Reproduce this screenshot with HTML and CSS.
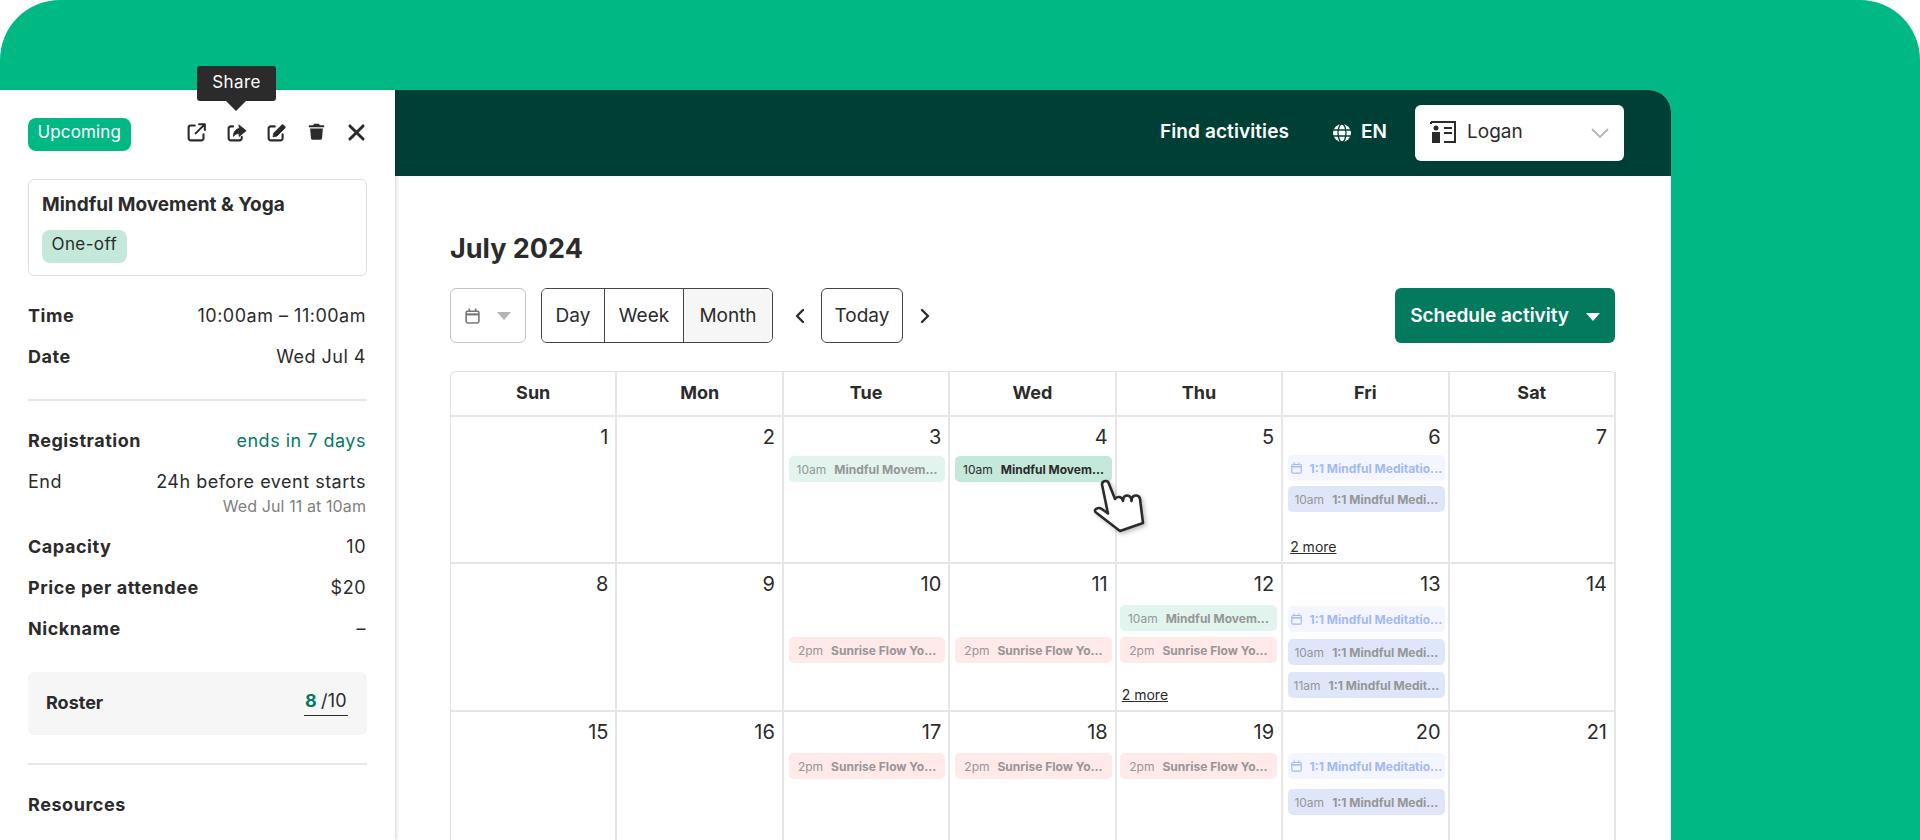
FILE: index.html

```html
<!DOCTYPE html>
<html lang="en">
<head>
  <meta charset="UTF-8">
  <meta name="viewport" content="width=device-width, initial-scale=1.0">
  <title>Activity calendar</title>
  <link rel="stylesheet" href="styles.css">
</head>

<body>
  <div class="backdrop">
    <div class="app">

      <aside class="sidebar">
        <div class="sidebar-top">
          <span class="badge">Upcoming</span>
          <div class="actions">
            <svg class="icon" viewBox="0 0 24 24" fill="none" stroke="#2b2b2b" stroke-width="2.4" stroke-linecap="round" stroke-linejoin="round"><path d="M10 4H5.5A2.5 2.5 0 0 0 3 6.5v12A2.5 2.5 0 0 0 5.5 21h12a2.5 2.5 0 0 0 2.5-2.5V14"/><path d="M15 2.5h6.500V9M21 3 11 13"/></svg>
            <svg class="icon" viewBox="0 0 24 24" fill="none" stroke="#2b2b2b" stroke-width="2.4" stroke-linecap="round" stroke-linejoin="round"><path d="M8 5H5.5A2.5 2.5 0 0 0 3 7.5v11A2.5 2.5 0 0 0 5.5 21h10a2.5 2.5 0 0 0 2.5-2.5V17"/><path fill="#2b2b2b" stroke-width="1" d="M15 3.5 23 10l-8 6.5v-3.3c-3 0-5 .8-6.5 3.300 0-5 2.500-8.500 6.500-9z"/></svg>
            <svg class="icon" viewBox="0 0 24 24" fill="none" stroke="#2b2b2b" stroke-width="2.4" stroke-linecap="round" stroke-linejoin="round"><path d="M10 5H5.5A2.5 2.5 0 0 0 3 7.5v11A2.5 2.5 0 0 0 5.5 21h11a2.5 2.5 0 0 0 2.5-2.5V14"/><path fill="#2b2b2b" stroke-width="1" d="M9 12.5 18 3.5a1.5 1.5 0 0 1 2 0l1.500 1.500a1.500 1.500 0 0 1 0 2l-9 9-4 1z"/></svg>
            <svg class="icon icon-small" viewBox="0 0 20 20" fill="#2b2b2b"><path d="M7 1h6l.8 1.5H19V5H1V2.500h5.200zM2.500 6.500h15L16.500 18a2 2 0 0 1-2 1.800h-9a2 2 0 0 1-2-1.800z"/></svg>
            <svg class="icon" viewBox="0 0 24 24" fill="none" stroke="#2b2b2b" stroke-width="3.4" stroke-linecap="round"><path d="M4.500 4.500 19.500 19.500M19.500 4.500 4.500 19.500"/></svg>
          </div>
          <div class="tooltip">Share</div>
        </div>

        <div class="activity-card">
          <div class="activity-name">Mindful Movement &amp; Yoga</div>
          <span class="tag">One-off</span>
        </div>

        <div class="row first-row"><b>Time</b><span>10:00am – 11:00am</span></div>
        <div class="row"><b>Date</b><span>Wed Jul 4</span></div>

        <hr class="divider">

        <div class="row"><b>Registration</b><span class="text-green">ends in 7 days</span></div>
        <div class="row"><span>End</span><span>24h before event starts</span></div>
        <div class="row-sub">Wed Jul 11 at 10am</div>
        <div class="row capacity"><b>Capacity</b><span>10</span></div>
        <div class="row"><b>Price per attendee</b><span>$20</span></div>
        <div class="row"><b>Nickname</b><span>–</span></div>

        <div class="roster">
          <b>Roster</b>
          <span class="roster-count"><b class="text-green">8</b>/10</span>
        </div>

        <hr class="divider divider-roster">

        <div class="row resources"><b>Resources</b></div>
      </aside>

      <main class="main">
        <header class="topbar">
          <a class="topbar-link">Find activities</a>
          <div class="lang">
            <svg width="18" height="18" viewBox="0 0 18 18" fill="#fff" stroke="#003f35" stroke-width="1.3"><circle cx="9" cy="9" r="9" stroke="none"/><ellipse cx="9" cy="9" rx="4" ry="9" fill="none"/><path d="M0 6h18M0 12h18" fill="none"/></svg>
            <span>EN</span>
          </div>
          <div class="user-select">
            <svg width="26" height="24" viewBox="0 0 26 24" fill="none" stroke="#2b2b2b" stroke-width="2"><path d="M1 2h24v20H14"/><path d="M1 2v2"/><path d="M14 8h8M14 13h8"/><circle cx="6" cy="8" r="2.5" fill="#2b2b2b" stroke="none"/><path d="M2 12h8v11H2z" fill="#2b2b2b" stroke="none"/></svg>
            <span class="user-name">Logan</span>
            <svg class="chevron-down" width="18" height="10" viewBox="0 0 18 10" fill="none" stroke="#b5b5b5" stroke-width="1.8"><path d="M1 1l8 8 8-8"/></svg>
          </div>
        </header>

        <section class="content">
          <h1 class="month-title">July 2024</h1>

          <div class="toolbar">
            <div class="picker">
              <svg width="15" height="16" viewBox="0 0 14 15" fill="none" stroke="#777" stroke-width="1.5"><rect x="1" y="3" width="12" height="11" rx="1.5"/><path d="M1 6h12" stroke-width="2"/><path d="M4 .5v3M10 .5v3"/></svg>
              <span class="caret caret-grey"></span>
            </div>
            <div class="segmented">
              <button type="button" class="seg seg-day">Day</button>
              <button type="button" class="seg seg-week">Week</button>
              <button type="button" class="seg seg-month">Month</button>
            </div>
            <svg class="nav-prev" width="10" height="16" viewBox="0 0 10 16" fill="none" stroke="#2b2b2b" stroke-width="2.4" stroke-linecap="round" stroke-linejoin="round"><path d="M8 2 2 8l6 6"/></svg>
            <button type="button" class="today">Today</button>
            <svg class="nav-next" width="10" height="16" viewBox="0 0 10 16" fill="none" stroke="#2b2b2b" stroke-width="2.4" stroke-linecap="round" stroke-linejoin="round"><path d="M2 2l6 6-6 6"/></svg>
            <button type="button" class="schedule">Schedule activity <span class="caret"></span></button>
          </div>

          <div class="calendar">
            <div class="head">Sun</div>
            <div class="head">Mon</div>
            <div class="head">Tue</div>
            <div class="head">Wed</div>
            <div class="head">Thu</div>
            <div class="head">Fri</div>
            <div class="head">Sat</div>

            <div class="day"><div class="num">1</div></div>
            <div class="day"><div class="num">2</div></div>
            <div class="day">
              <div class="num">3</div>
              <div class="event green faded"><span class="time">10am</span><b>Mindful Movem...</b></div>
            </div>
            <div class="day">
              <div class="num">4</div>
              <div class="event green"><span class="time">10am</span><b>Mindful Movem...</b></div>
            </div>
            <div class="day"><div class="num">5</div></div>
            <div class="day gap-5">
              <div class="num">6</div>
              <div class="event sky"><svg class="event-icon" viewBox="0 0 14 15" fill="none" stroke="#a3b9f7" stroke-width="1.5"><rect x="1" y="3" width="12" height="11" rx="1.5"/><path d="M1 6h12" stroke-width="2"/><path d="M4 .5v3M10 .5v3"/></svg><b>1:1 Mindful Meditatio...</b></div>
              <div class="event blue"><span class="time">10am</span><b>1:1 Mindful Medi...</b></div>
              <a class="more">2 more</a>
            </div>
            <div class="day"><div class="num">7</div></div>

            <div class="day"><div class="num">8</div></div>
            <div class="day"><div class="num">9</div></div>
            <div class="day">
              <div class="num">10</div>
              <div class="slot"></div>
              <div class="event pink"><span class="time">2pm</span><b>Sunrise Flow Yo...</b></div>
            </div>
            <div class="day">
              <div class="num">11</div>
              <div class="slot"></div>
              <div class="event pink"><span class="time">2pm</span><b>Sunrise Flow Yo...</b></div>
            </div>
            <div class="day thu">
              <div class="num">12</div>
              <div class="event green faded"><span class="time">10am</span><b>Mindful Movem...</b></div>
              <div class="event pink"><span class="time">2pm</span><b>Sunrise Flow Yo...</b></div>
              <a class="more">2 more</a>
            </div>
            <div class="day gap-7">
              <div class="num">13</div>
              <div class="event sky"><svg class="event-icon" viewBox="0 0 14 15" fill="none" stroke="#a3b9f7" stroke-width="1.5"><rect x="1" y="3" width="12" height="11" rx="1.5"/><path d="M1 6h12" stroke-width="2"/><path d="M4 .5v3M10 .5v3"/></svg><b>1:1 Mindful Meditatio...</b></div>
              <div class="event blue"><span class="time">10am</span><b>1:1 Mindful Medi...</b></div>
              <div class="event blue"><span class="time">11am</span><b>1:1 Mindful Medit...</b></div>
            </div>
            <div class="day"><div class="num">14</div></div>

            <div class="day"><div class="num">15</div></div>
            <div class="day"><div class="num">16</div></div>
            <div class="day">
              <div class="num">17</div>
              <div class="event pink"><span class="time">2pm</span><b>Sunrise Flow Yo...</b></div>
            </div>
            <div class="day">
              <div class="num">18</div>
              <div class="event pink"><span class="time">2pm</span><b>Sunrise Flow Yo...</b></div>
            </div>
            <div class="day thu">
              <div class="num">19</div>
              <div class="event pink"><span class="time">2pm</span><b>Sunrise Flow Yo...</b></div>
            </div>
            <div class="day gap-10">
              <div class="num">20</div>
              <div class="event sky"><svg class="event-icon" viewBox="0 0 14 15" fill="none" stroke="#a3b9f7" stroke-width="1.5"><rect x="1" y="3" width="12" height="11" rx="1.5"/><path d="M1 6h12" stroke-width="2"/><path d="M4 .5v3M10 .5v3"/></svg><b>1:1 Mindful Meditatio...</b></div>
              <div class="event blue"><span class="time">10am</span><b>1:1 Mindful Medi...</b></div>
            </div>
            <div class="day"><div class="num">21</div></div>
          </div>

          <svg class="hand" width="60" height="62" viewBox="0 0 60 62" fill="#fff" stroke="#2b2b2b" stroke-width="2.6" stroke-linejoin="round" stroke-linecap="round">
            <path d="M5 32c-1.5 1-1.5 2.5 0 3.5L29 54l23-8-3-24c-.5-4-6-5-8-1l-.5 3c0-6-6-7-8-3l-.5 3c-1-5-6-5-8-2L18 7c-1-4.500-7-3.500-7 .5l6 29-7-5c-2-1-3.500-.5-5 .5z"/>
          </svg>
        </section>
      </main>

    </div>
  </div>
</body>
</html>
```

FILE: styles.css

```css
* {
  box-sizing: border-box;
}

body {
  margin: 0;
  background-color: #fff;
  font-family: 'Inter', 'Liberation Sans', sans-serif;
  color: #2b2b2b;
}

.backdrop {
  height: 840px;
  overflow: hidden;
  padding: 90px 249px 0 0;
  background-color: #00b884;
  border-radius: 60px 60px 0 0;
}

.app {
  display: flex;
  height: 750px;
}

/* left panel */
.sidebar {
  position: relative;
  z-index: 2;
  width: 395px;
  flex-shrink: 0;
  padding: 28px 28px 0;
  background-color: #fff;
  box-shadow: 2px 0 3px rgba(0, 0, 0, 0.12);
}

.sidebar-top {
  position: relative;
  display: flex;
  align-items: center;
  justify-content: space-between;
  height: 33px;
}

.badge {
  padding: 0 9.5px 4px;
  line-height: 29px;
  border-radius: 8px;
  background-color: #00b884;
  color: #fff;
  font-size: 17px;
  letter-spacing: 0.15px;
}

.actions {
  display: flex;
  align-items: center;
  gap: 19px;
  margin-bottom: 4px;
}

.icon {
  width: 21px;
  height: 21px;
}

.icon-small {
  width: 17px;
  height: 19px;
  margin: 0 2px 3px;
}

.tooltip {
  position: absolute;
  left: 169px;
  top: -52px;
  width: 79px;
  height: 35px;
  border-radius: 3px;
  background-color: #2b2b2b;
  color: #fff;
  font-size: 17px;
  letter-spacing: 0.4px;
  line-height: 32px;
  text-align: center;
}

.tooltip::after {
  content: "";
  position: absolute;
  left: 29px;
  top: 35px;
  border: 10px solid transparent;
  border-bottom: 0;
  border-top-color: #2b2b2b;
}

.activity-card {
  height: 97px;
  margin-top: 28px;
  padding: 13px 13px 0;
  border: 1px solid #dedede;
  border-radius: 6px;
}

.activity-name {
  font-size: 19px;
  font-weight: 700;
  line-height: 24px;
}

.tag {
  display: inline-block;
  margin-top: 13px;
  padding: 0 9.5px 4px;
  line-height: 29px;
  border-radius: 8px;
  background-color: #c4e8da;
  font-size: 17px;
  letter-spacing: 0.4px;
}

.row {
  display: flex;
  justify-content: space-between;
  height: 24px;
  margin-top: 17px;
  padding-right: 1px;
  font-size: 18px;
  letter-spacing: 0.5px;
  line-height: 24px;
}

.first-row {
  margin-top: 28px;
}

.row b {
  font-weight: 700;
  letter-spacing: 0.55px;
}

.text-green {
  color: #037a5e;
}

.row-sub {
  margin-top: 2px;
  padding-right: 1px;
  color: #808080;
  font-size: 16px;
  letter-spacing: 0.1px;
  line-height: 20px;
  text-align: right;
}

.capacity {
  margin-top: 19px;
}

.divider {
  height: 2px;
  margin: 30px 0 28px;
  border: 0;
  background-color: #e6e6e6;
}

.roster {
  display: flex;
  align-items: center;
  justify-content: space-between;
  height: 63px;
  margin-top: 31px;
  padding: 0 19px 2px 18px;
  border-radius: 6px;
  background-color: #f6f6f6;
  font-size: 18px;
}

.roster b {
  font-weight: 700;
}

.roster-count {
  padding: 0 1px 4px;
  border-bottom: 1px solid #2b2b2b;
  letter-spacing: 0.3px;
}

.roster-count b {
  margin-right: 4px;
}

.divider-roster {
  margin: 28px 0 0;
}

.resources {
  margin-top: 28px;
}

/* main panel */
.main {
  flex: 1;
  min-width: 0;
  display: flex;
  flex-direction: column;
  overflow: hidden;
  border-top-right-radius: 22px;
  background-color: #fff;
}

.topbar {
  display: flex;
  align-items: center;
  justify-content: flex-end;
  flex-shrink: 0;
  height: 86px;
  padding: 0 47px 0 0;
  background-color: #003f35;
  color: #fff;
  font-size: 19px;
  font-weight: 600;
}

.topbar-link,
.lang span {
  margin-bottom: 3px;
}

.topbar-link {
  letter-spacing: 0.1px;
}

.lang {
  display: flex;
  align-items: center;
  gap: 10px;
  margin-left: 44px;
}

.user-select {
  display: flex;
  align-items: center;
  width: 209px;
  height: 56px;
  margin-left: 28px;
  padding: 0 15px 3px;
  border-radius: 6px;
  background-color: #fff;
  color: #2b2b2b;
  font-weight: 400;
}

.user-name {
  margin-left: 11px;
}

.chevron-down {
  margin-left: auto;
  margin-top: 3px;
}

.content {
  position: relative;
  padding: 56px 56px 0 55px;
}

.month-title {
  margin: 0;
  font-size: 27px;
  font-weight: 700;
  line-height: 34px;
}

.toolbar {
  display: flex;
  align-items: center;
  height: 55px;
  margin-top: 22px;
}

.picker {
  display: flex;
  align-items: center;
  justify-content: center;
  gap: 17px;
  width: 76px;
  height: 55px;
  border: 1px solid #c4c4c4;
  border-radius: 6px;
}

.caret {
  display: inline-block;
  border: 7px solid transparent;
  border-bottom: 0;
  border-top: 8px solid #fff;
  vertical-align: 1px;
  margin-left: 12px;
}

.caret-grey {
  margin: 0;
  border-top-color: #b5b5b5;
}

.segmented {
  display: flex;
  height: 55px;
  margin-left: 15px;
  border: 1px solid #444;
  border-radius: 6px;
  overflow: hidden;
}

.seg,
.today {
  padding: 0;
  background-color: #fff;
  border: 0;
  color: #2b2b2b;
  font-family: inherit;
  font-size: 19px;
}

.seg-day {
  width: 62px;
}

.seg-week {
  width: 80px;
  border-left: 1px solid #444;
  border-right: 1px solid #444;
}

.seg-month {
  width: 88px;
  background-color: #f6f6f6;
}

.nav-prev {
  margin-left: 22px;
}

.today {
  width: 82px;
  height: 55px;
  margin-left: 16px;
  border: 1px solid #444;
  border-radius: 6px;
}

.nav-next {
  margin-left: 17px;
}

.schedule {
  width: 220px;
  height: 55px;
  margin-left: auto;
  border: 0;
  border-radius: 6px;
  background-color: #037a5e;
  color: #fff;
  font-family: inherit;
  font-size: 19px;
  font-weight: 600;
}

.calendar {
  display: grid;
  grid-template-columns: repeat(7, 1fr);
  grid-template-rows: 45px 147px 148px 148px;
  width: 1166px;
  margin-top: 28px;
  border-top: 1px solid #e0e0e0;
  border-left: 1px solid #e0e0e0;
  border-radius: 6px 6px 0 0;
}

.head {
  display: flex;
  align-items: center;
  justify-content: center;
  padding-bottom: 2px;
  border-right: 2px solid #e6e6e6;
  border-bottom: 2px solid #e6e6e6;
  font-size: 18px;
  font-weight: 700;
}

.day {
  display: flex;
  flex-direction: column;
  gap: 6px;
  min-width: 0;
  padding: 7px 3px 6px 5px;
  border-right: 2px solid #e6e6e6;
  border-bottom: 2px solid #e6e6e6;
}

.thu {
  padding-left: 3px;
  padding-right: 4px;
}

.gap-5 {
  gap: 5px;
}

.gap-7 {
  gap: 7px;
}

.gap-10 {
  gap: 10px;
}

.num {
  height: 26px;
  padding-right: 4px;
  font-size: 20px;
  line-height: 26px;
  text-align: right;
}

/* events sit 2px lower from the second week on */
.day:nth-child(n+15) .num {
  margin-bottom: 2px;
}

.day.gap-10 .num {
  margin-bottom: -2px;
}

.thu .num {
  padding-right: 3px;
}

.slot {
  height: 26px;
}

.event {
  display: flex;
  align-items: center;
  justify-content: center;
  gap: 8px;
  height: 26px;
  padding: 0 8px;
  border-radius: 5px;
  color: #969696;
  font-size: 12px;
  white-space: nowrap;
  overflow: hidden;
}

.event b {
  font-weight: 700;
}

.event .time {
  font-weight: 400;
}

.green {
  background-color: #c4e8da;
  color: #2b2b2b;
}

.green.faded {
  background-color: #e1f4ed;
  color: #969696;
}

.pink {
  background-color: #ffe9e9;
}

.blue {
  background-color: #dfe6f9;
}

.sky {
  background-color: #f3f6ff;
  color: #a3b9f7;
}

.event-icon {
  width: 11px;
  height: 12px;
  flex-shrink: 0;
}

.more {
  margin-top: auto;
  margin-left: 2px;
  font-size: 14px;
  line-height: 18px;
  text-decoration: underline;
}

.hand {
  position: absolute;
  left: 696px;
  top: 301px;
  filter: drop-shadow(2px 2px 2px rgba(0, 0, 0, 0.25));
}
```
